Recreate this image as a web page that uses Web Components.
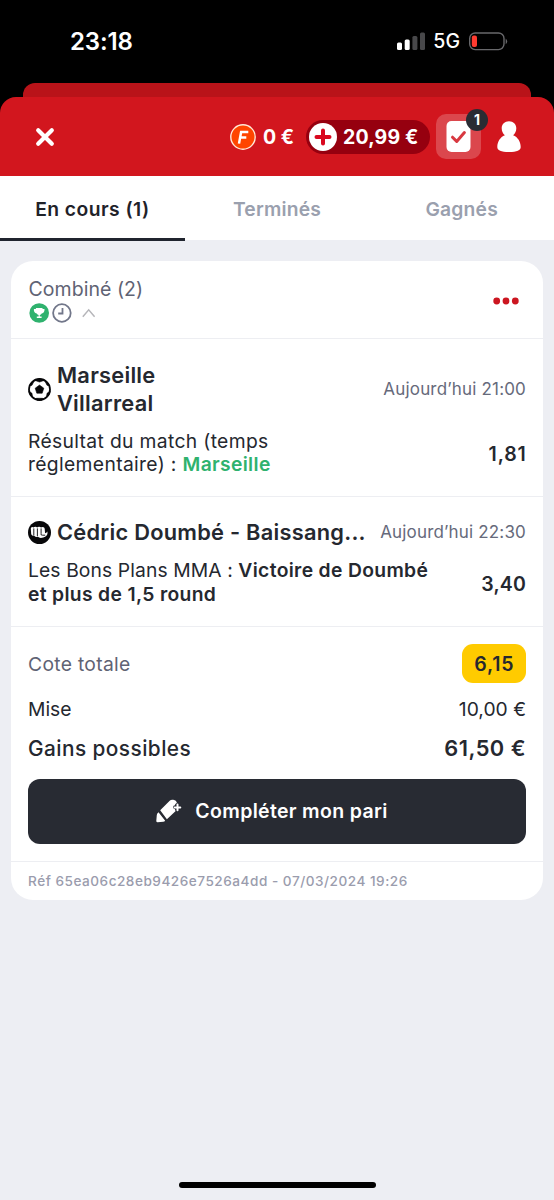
<!DOCTYPE html>
<html lang="fr">
<head>
<meta charset="utf-8">
<title>Mes paris</title>
<style>
html,body{margin:0;height:1200px;background:#000;overflow:hidden}
body{font-family:Inter,"Liberation Sans",sans-serif;color:#25282f;width:554px}
</style>
</head>
<body>
<bets-app></bets-app>
<script>
function define(name, html) {
  const template = document.createElement('template');
  template.innerHTML = html;
  customElements.define(name, class extends HTMLElement {
    constructor() {
      super();
      this.attachShadow({ mode: 'open' }).appendChild(template.content.cloneNode(true));
    }
  });
}

define('status-bar', `
<style>
:host{display:flex;box-sizing:border-box;height:83px;background:#000;color:#fff;padding:27px 46px 0 70px;align-items:flex-start}
.time{font-size:24px;font-weight:600;line-height:29px;letter-spacing:-.1px;flex:1}
.net{font-size:19.5px;font-weight:500;line-height:29px;margin:0 9px 0 8px}
svg{display:block}
</style>
<span class="time">23:18</span>
<svg width="28" height="29" viewBox="0 0 28 29"><g fill="#fff"><rect y="15.500" width="5" height="7.500" rx="1.500"/><rect x="7.700" y="12.500" width="5" height="10.500" rx="1.500"/></g><g fill="#48484a"><rect x="15.400" y="9" width="5" height="14" rx="1.500"/><rect x="23" y="5.500" width="5" height="17.500" rx="1.500"/></g></svg>
<span class="net">5G</span>
<svg width="39" height="29" viewBox="0 0 39 29"><rect x=".7" y="6" width="34.300" height="16.600" rx="5.500" fill="none" stroke="#68686b" stroke-width="1.400"/><rect x="2.800" y="8.600" width="5.200" height="11.500" rx="2" fill="#ff3b30"/><path d="M36.700 11.500q3 2.900 0 5.800z" fill="#68686b"/></svg>
`);

define('app-header', `
<style>
:host{display:flex;box-sizing:border-box;height:79px;padding:0 32px 0 35px;background:#d2161e;border-radius:16px 16px 0 0;color:#fff;align-items:center;font-size:19.5px;font-weight:700}
svg{display:block}
.close{margin-right:auto}
.free{display:flex;align-items:center;gap:7px;margin-right:12px}
.pill{display:flex;align-items:center;box-sizing:border-box;width:124px;height:34px;border-radius:17px;background:#96000f;padding-left:3px;gap:6px;margin-right:6px}
.bal{letter-spacing:.15px}
.tile{position:relative;display:grid;place-items:center;width:45px;height:45px;border-radius:10px;background:rgba(255,255,255,.21);margin-right:15px}
.badge{position:absolute;left:30px;top:-5px;width:22px;height:22px;border-radius:50%;background:#292c33;font-size:14px;line-height:22px;text-align:center}
</style>
<svg class="close" width="20" height="20" viewBox="0 0 20 20"><path d="M3.200 3.200l13.600 13.600M16.800 3.200L3.200 16.800" stroke="#fff" stroke-width="4.200" stroke-linecap="round"/></svg>
<div class="free">
<svg width="26" height="26" viewBox="0 0 26 26"><circle cx="13" cy="13" r="12.200" fill="#ff4500" stroke="#ffe9d8" stroke-width="1.400"/><path d="M10.800 8.100h7.500M10 13.500h6.300M11.300 7L9 19.600" fill="none" stroke="#fff" stroke-width="2.500"/></svg>
<span class="zero">0 €</span></div>
<div class="pill">
<svg width="28" height="28" viewBox="0 0 28 28"><circle cx="14" cy="14" r="14" fill="#fff"/><path d="M14 7.500v13M7.500 14h13" stroke="#d9081f" stroke-width="4" stroke-linecap="round"/></svg>
<span class="bal">20,99 €</span></div>
<div class="tile">
<svg width="25" height="31" viewBox="0 0 25 31"><rect x=".5" width="24" height="31" rx="5" fill="#fff"/><path d="M6.500 16.200l4.200 4.200 7.700-8.800" fill="none" stroke="#d83840" stroke-width="3" stroke-linecap="round" stroke-linejoin="round"/></svg>
<span class="badge">1</span></div>
<svg width="26" height="33" viewBox="0 0 26 33"><path d="M13 1.300c4.300 0 7.300 3 7.300 7 0 3-1.300 5.400-3.200 7 4.700 1.700 7.600 6.700 7.600 11.700 0 3.300-3.700 5-11.700 5S1.300 30.300 1.300 27C1.300 22 4.200 17 8.900 15.300c-1.900-1.600-3.200-4-3.200-7 0-4 3-7 7.300-7z" fill="#fff"/></svg>
`);

define('tab-item', `
<style>
:host{flex:1;box-sizing:border-box;display:block;height:64px;text-align:center;font-size:19.300px;font-weight:600;line-height:66px;color:#9aa0ae;letter-spacing:.2px}
:host([active]){color:#1f2229;height:65px;border-bottom:3px solid #20242e;letter-spacing:.45px}
</style><slot></slot>
`);
define('tab-bar', `
<style>:host{display:flex;height:63.500px;background:#fff;position:relative;z-index:1}</style>
<slot></slot>
`);

define('bet-event', `
<style>
:host{display:block;box-sizing:border-box;border-top:1.500px solid #edeef2;padding:0 17px}
.head{display:flex;align-items:center}
.icon{width:29px;flex:none}
.title{font-size:21.800px;font-weight:600;line-height:28px;flex:1;white-space:nowrap;letter-spacing:.26px}
.date{font-size:17px;color:#666a7b;white-space:nowrap;letter-spacing:.17px}
.pick{display:flex;align-items:center;font-size:19.300px;line-height:23.500px}
.label{flex:1;white-space:nowrap;letter-spacing:.34px}
.odds{font-size:19.500px;font-weight:600}
</style>
<div class="head"><span class="icon"><slot name="icon"></slot></span><span class="title"><slot name="title"></slot></span><span class="date"><slot name="date"></slot></span></div>
<div class="pick"><span class="label"><slot></slot></span><span class="odds"><slot name="odds"></slot></span></div>
`);

define('total-row', `
<style>
:host{display:flex;align-items:center;justify-content:space-between;font-size:19.300px;height:40px}
</style><slot name="label"></slot><slot></slot>
`);

define('cta-button', `
<style>
:host{display:flex;box-sizing:border-box;align-items:center;justify-content:center;height:64.500px;border-radius:12px;background:#282b33;color:#fff;font-size:19.500px;font-weight:600;gap:13px;padding-right:11px;letter-spacing:.33px}
svg{display:block}
</style>
<svg width="27" height="26" viewBox="0 0 27 26"><path d="M5.200 12.200L14.700 2.700q1.200-1.200 3.600-.9 2.500.4 3.400 2.100.4 1-.3 1.300-1.500.5-1.400 2.100-1.800.1-1.900 2 .1 1.600 1.900 1.900.1 1.500.7 1.800L11.900 21.200z" fill="#fff"/><path d="M3.500 14.200l6.700 8.600q-.8.800-2 .9L2.600 24.200Q1.200 24.200 1.300 22.700L1.800 17q.2-1.700 1.700-2.800z" fill="#fff"/><path d="M22.500 6.600v5.600M19.700 9.400h5.600" stroke="#fff" stroke-width="2" stroke-linecap="round"/></svg>
<slot></slot>
`);

define('bet-card', `
<style>
:host{display:block;box-sizing:border-box;width:532px;height:638.500px;margin:21.500px 0 0 11px;border-radius:22px;background:#fff;overflow:hidden}
header{display:flex;box-sizing:border-box;height:77px;padding:16px 24px 0 17.500px;justify-content:space-between}
.name{font-size:19.500px;line-height:24px;color:#5f6374;letter-spacing:.05px}
.marks{display:flex;align-items:center;height:24px}
svg{display:block}
.dots{margin-top:20px}
bet-event.one{height:158px;padding-top:22px}
bet-event.two{height:129.500px;padding-top:21px}
.won{color:#2fb26e;font-weight:600}
b{font-weight:600}
.plan{letter-spacing:.1px}
.totals{box-sizing:border-box;height:235px;border-top:1.500px solid #edeef2;padding:17px 17px 0}
.grey{color:#5f6374;letter-spacing:.3px}
.chip{box-sizing:border-box;width:64px;height:39.500px;border-radius:11px;background:#ffcb00;font-weight:600;font-size:19.500px;line-height:40px;text-align:center;letter-spacing:.8px;text-indent:.8px}
.r2{height:50px}.r3{height:29px;margin-bottom:16.500px}
.gain{font-size:20.800px;font-weight:500;letter-spacing:.45px}
.sum{font-size:21.800px;font-weight:600;letter-spacing:.5px}
footer{border-top:1.500px solid #edeef2;padding-left:17px;font-size:13.600px;font-weight:500;line-height:38px;color:#9a9cad;letter-spacing:.51px}
.p1{display:block;margin-top:12.500px}.p2{display:block;margin-top:13px}
.o1{display:block;margin-top:15px;letter-spacing:.8px;margin-right:-.500px}
.o2{display:block;margin-top:17px;letter-spacing:.15px}
</style>
<header><div><div class="name">Combiné (2)</div>
<div class="marks">
<svg width="70" height="22" viewBox="0 0 70 22"><circle cx="10.200" cy="11" r="9.800" fill="#2fb26e"/><path d="M6.900 6h6.600v1h2q.3 4-2.800 4.400-.7 1.200-1.900 1.500v1.700h1.800v1.400H7.800v-1.400h1.800v-1.700q-1.200-.3-1.900-1.500Q4.500 11 4.900 7h2z" fill="#fff"/><circle cx="32.900" cy="11" r="8.800" fill="none" stroke="#72778a" stroke-width="1.800"/><path d="M33.500 6v5.500h-4.300" fill="none" stroke="#72778a" stroke-width="1.800"/><path d="M53.800 14.800l5.900-7 5.900 7" fill="none" stroke="#b6b6ba" stroke-width="1.500"/></svg></div></div>
<svg class="dots" width="28" height="8" viewBox="0 0 28 8"><g fill="#cc1620"><circle cx="5.700" cy="4" r="3.400"/><circle cx="15" cy="4" r="3.400"/><circle cx="24.300" cy="4" r="3.400"/></g></svg></header>
<bet-event class="one">
<svg slot="icon" width="23" height="23" viewBox="0 0 23 23"><circle cx="11.500" cy="11.500" r="10.500" fill="#fff" stroke="#08080a" stroke-width="1.800"/><path d="M11.500 7.100l4.300 3.100-1.600 5H8.800l-1.600-5zM6.500 2.300L11.500 4l5-1.700L11.500.5zM1 8l3-.7 1.800-3.800L3 5zM22 8l-3-.7-1.800-3.800L20 5zM.8 13.300l3.200 2 .5 4-2.300-2.200zM22.200 13.300l-3.200 2-.5 4 2.300-2.200zM8.300 20.300h6.400l-1 2H9.300z" fill="#08080a" stroke="#08080a" stroke-width=".6" stroke-linejoin="round"/></svg>
<span slot="title">Marseille<br>Villarreal</span>
<span slot="date">Aujourd’hui 21:00</span>
<span class="p1">Résultat du match (temps<br>réglementaire) : <span class="won">Marseille</span></span>
<span slot="odds" class="o1">1,81</span>
</bet-event>
<bet-event class="two">
<svg slot="icon" width="23" height="23" viewBox="0 0 23 23"><circle cx="11.500" cy="11.500" r="11.500" fill="#08080a"/><path d="M2.800 7.600q0-1.500 1.500-1.500.8 0 1.300.5.500-.9 1.700-.9t1.900.9q.6-.9 1.900-.9t1.900.9q.6-.7 1.700-.7 1.900 0 2 1.800l.4 4.600q1.400-.4 2.200-1.900 1 3.400-2.200 5.400-1.600 1.100-4.300 1.100-2 0-2.900-1.100-2.300.5-3.400-.7-2.700.2-3.300-1.800z" fill="#fff"/><path d="M5.800 7.800v6.500M9.400 7.800v7M13.100 7.800v4.700q-.8 1.700 1.400 1.700h2.300" fill="none" stroke="#08080a" stroke-width=".9" stroke-linecap="round"/></svg>
<span slot="title">Cédric Doumbé - Baissang...</span>
<span slot="date">Aujourd’hui 22:30</span>
<span class="p2"><span class="plan">Les Bons Plans MMA : </span><b>Victoire de Doumbé</b><br><b>et plus de 1,5 round</b></span>
<span slot="odds" class="o2">3,40</span>
</bet-event>
<div class="totals">
<total-row class="r1"><span slot="label" class="grey">Cote totale</span><div class="chip">6,15</div></total-row>
<total-row class="r2"><span slot="label">Mise</span><span>10,00 €</span></total-row>
<total-row class="r3"><span slot="label" class="gain">Gains possibles</span><span class="sum">61,50 €</span></total-row>
<cta-button>Compléter mon pari</cta-button>
</div>
<footer>Réf 65ea06c28eb9426e7526a4dd - 07/03/2024 19:26</footer>
`);

define('bets-app', `
<style>
:host{display:flex;flex-direction:column;width:554px;height:1200px;background:#000}
.back{height:14px;margin:0 23px;background:#b91319;border-radius:12px 12px 0 0}
main{flex:1;background:#edeef3;display:flex;flex-direction:column}
.home{width:197px;height:6px;border-radius:3px;background:#000;margin:auto auto 12px 179px}
</style>
<status-bar></status-bar><div class="back"></div><app-header></app-header>
<main><tab-bar><tab-item active>En cours (1)</tab-item><tab-item>Terminés</tab-item><tab-item>Gagnés</tab-item></tab-bar>
<bet-card></bet-card><div class="home"></div></main>
`);
</script>
</body>
</html>
